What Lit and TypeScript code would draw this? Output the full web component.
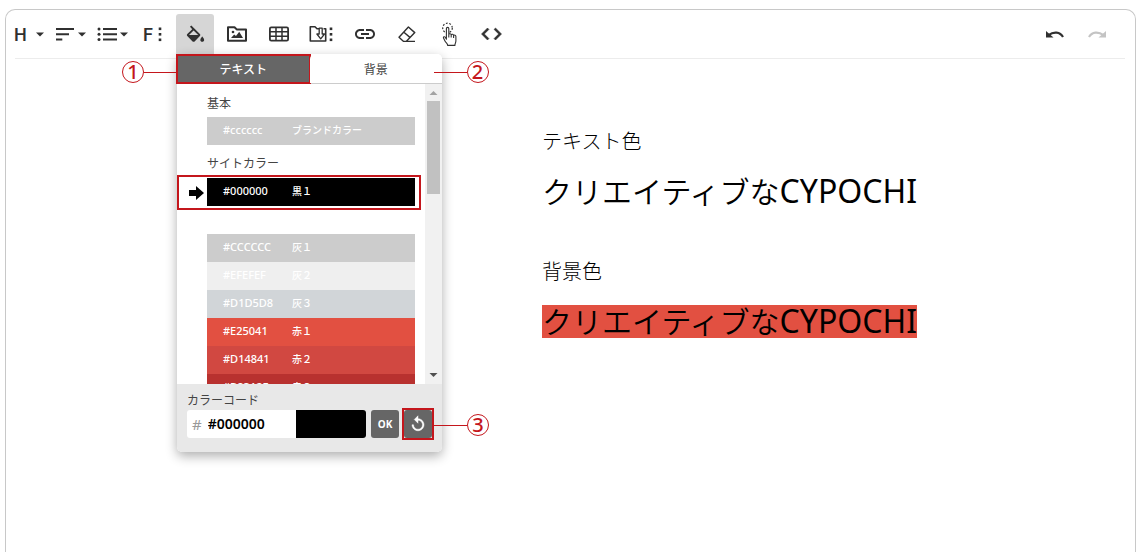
import { LitElement, html, svg, css, nothing } from "lit";
import { customElement, property, state } from "lit/decorators.js";
import { classMap } from "lit/directives/class-map.js";
import { styleMap } from "lit/directives/style-map.js";

const caret = (x: number) => svg`<path d="M${x} 18.4h8l-4 4.2z"/>`;
const dots = (x: number) => svg`
  <rect x=${x} y="13.5" width="2.6" height="2.6"/>
  <rect x=${x} y="19" width="2.6" height="2.6"/>
  <rect x=${x} y="24.5" width="2.6" height="2.6"/>`;

const icons: Record<string, unknown> = {
  heading: svg`<text class="letter" x="6" y="27">H</text>${caret(28)}`,
  align: svg`<path d="M6 14h18v2H6zM6 19.3h13v2H6zM6 24.5h6.3v2H6z"/>${caret(28)}`,
  list: svg`<path d="M11 14h14v2H11zM11 19.3h14v2H11zM11 24.5h14v2H11z"/>
    <circle cx="7" cy="15" r="1.5"/><circle cx="7" cy="20.3" r="1.5"/><circle cx="7" cy="25.5" r="1.5"/>${caret(28)}`,
  font: svg`<text class="letter" x="9" y="27">F</text>${dots(24.7)}`,
  fill: svg`<path transform="translate(8 11.5) scale(.96)" d="M16.56 8.94L7.62 0 6.21 1.41l2.38 2.38-5.15 5.15c-.59.59-.59 1.54 0 2.12l5.5 5.5c.29.29.68.44 1.06.44s.77-.15 1.06-.44l5.5-5.5c.59-.58.59-1.53 0-2.12zM5.21 10L10 5.21 14.79 10H5.21zM19 11.5s-2 2.17-2 3.5c0 1.1.9 2 2 2s2-.9 2-2c0-1.33-2-3.5-2-3.5z"/>`,
  image: svg`<path class="line" stroke-width="2" stroke-linejoin="round" d="M10 13.2h6.5l2.2 2.2h9.3v11.4H10z"/>
    <circle cx="15" cy="18" r="1.3"/><path d="M13 24l3.2-3.6 1.8 1.7 3.2-4.3L25 24z"/>`,
  table: svg`<rect class="line" stroke-width="1.8" x="9.9" y="13.4" width="18.2" height="13.2" rx="1.4"/>
    <path class="line" stroke-width="1.5" d="M10 17.8h18M10 22.2h18M16 13.5v13M22 13.5v13"/>`,
  file: svg`<path class="line" stroke-width="1.6" stroke-linejoin="round" d="M17 14.8h-2l-2-2H8.3v14.2h15.4V14.8H21.5"/>
    <path class="line" stroke-width="1.3" stroke-linejoin="round" d="M17.2 14.2h3v5.8h2.3l-3.8 4.8-3.8-4.8h2.3z"/>${dots(27.7)}`,
  link: svg`<path transform="translate(9 8)" d="M3.9 12c0-1.71 1.39-3.1 3.1-3.1h4V7H7c-2.76 0-5 2.24-5 5s2.24 5 5 5h4v-1.9H7c-1.71 0-3.1-1.39-3.1-3.1zM8 13h8v-2H8v2zm9-6h-4v1.9h4c1.71 0 3.1 1.39 3.1 3.1s-1.39 3.1-3.1 3.1h-4V17h4c2.76 0 5-2.24 5-5s-2.24-5-5-5z"/>`,
  erase: svg`<path class="line" stroke-width="1.4" stroke-linejoin="round" d="M22.4 13l6.4 5.6-8.6 8.8h-2.6L13 23.2zM17.6 18l6.6 5.6M18 27.4h11"/>`,
  hand: svg`<circle class="line" stroke-width="1.2" stroke-dasharray="1.8 1.6" cx="19.5" cy="14" r="4.8"/>
    <path class="hand" stroke-width="1.1" stroke-linejoin="round" d="M18.4 25.2V14.6c0-1.7 2.4-1.7 2.4 0v5.8c.4-1 2.3-.8 2.4.4.5-.9 2.2-.6 2.4.6.7-.7 2.3-.2 2.3 1.2v4.2c0 2-1 2.6-1 4.6h-7.2c0-1.8-1.7-2.4-2.6-4.2l-1.6-3.1c-.5-1.3 1-1.9 1.8-.8zM20.8 20.4v3M23.2 20.8v2.8M25.6 21.5v2.5"/>`,
  code: svg`<path stroke="currentColor" stroke-width=".6" transform="translate(9.5 8)" d="M9.4 16.6L4.8 12l4.6-4.6L8 6l-6 6 6 6 1.4-1.4zm5.2 0l4.6-4.6-4.6-4.6L16 6l6 6-6 6-1.4-1.4z"/>`,
  undo: svg`<path d="M10 17v6.5h7.5z"/><path class="line" stroke-width="2.2" d="M12.5 21.2c5-3.8 11.5-3.6 14.5 1.8"/>`,
  redo: svg`<path d="M28 17v6.5h-7.5z"/><path class="line" stroke-width="2.2" d="M25.5 21.2c-5-3.8-11.5-3.6-14.5 1.8"/>`,
};

@customElement("tool-button")
class ToolButton extends LitElement {
  @property() icon = "";
  @property() label = "";
  @property({ type: Boolean }) active = false;
  @property({ type: Boolean }) disabled = false;

  static styles = css`
    :host { display: block; }
    .tool {
      display: block;
      width: 38px;
      height: 40px;
      padding: 0;
      border: 0;
      border-radius: 3px 3px 0 0;
      background: none;
      color: #303030;
      cursor: pointer;
    }
    .active { background: #d6d6d6; }
    .tool:disabled { color: #c4c4c4; }
    .glyph { display: block; fill: currentColor; }
    .line { fill: none; stroke: currentColor; }
    .hand { fill: #fff; stroke: currentColor; }
    .letter { font: 500 18px Roboto, sans-serif; }
  `;

  render() {
    return html`<button
      class=${classMap({ tool: true, active: this.active })}
      aria-label=${this.label}
      ?disabled=${this.disabled}
    ><svg class="glyph" width="38" height="40" viewBox="0 0 38 40">${icons[this.icon]}</svg></button>`;
  }
}

@customElement("step-mark")
class StepMark extends LitElement {
  @property() n = "";

  static styles = css`
    :host { display: flex; align-items: center; }
    :host([side="left"]) { flex-direction: row-reverse; }
    .wire { width: 33px; height: 1px; background: #c4161c; }
    .ring {
      box-sizing: border-box;
      width: 22px;
      height: 22px;
      border: 1px solid #c4161c;
      border-radius: 50%;
      color: #c4161c;
      font: 500 20px/20px "Noto Sans", sans-serif;
      text-align: center;
    }
  `;

  render() {
    return html`<span class="wire"></span><span class="ring">${this.n}</span>`;
  }
}

interface Swatch { code: string; name: string; }

const siteColors: Swatch[] = [
  { code: "#CCCCCC", name: "灰１" },
  { code: "#EFEFEF", name: "灰２" },
  { code: "#D1D5D8", name: "灰３" },
  { code: "#E25041", name: "赤１" },
  { code: "#D14841", name: "赤２" },
  { code: "#B8312F", name: "赤３" },
];

@customElement("color-panel")
class ColorPanel extends LitElement {
  @state() private tab = "text";
  @state() private value = "#000000";

  static styles = css`
    :host {
      display: block;
      width: 265px;
      border-radius: 5px;
      background: #fff;
      box-shadow: 0 4px 12px rgba(0, 0, 0, 0.32);
      color: #444;
      font: 12px/18px "Noto Sans", "Noto Sans CJK JP", sans-serif;
    }
    button { font: inherit; border: 0; padding: 0; cursor: pointer; }
    .tabs { display: grid; grid-template-columns: 1fr 1fr; border-bottom: 1px solid #ccc; }
    .tab-slot { position: relative; }
    .tab {
      display: block;
      width: 100%;
      height: 29px;
      padding-top: 2px;
      border-radius: 5px 5px 0 0;
      background: #fff;
      color: #444;
    }
    .selected { background: #666; color: #fff; font-weight: 500; }
    .frame {
      position: absolute;
      border: 2px solid #c4161c;
      pointer-events: none;
    }
    .frame-tab { inset: 0 -1px -1px -1px; }
    .frame-row { inset: -3px -6px -4px -30px; }
    .frame-reset { inset: -2px; }
    .mark { position: absolute; }
    .mark-text { right: 100%; top: 7px; }
    .mark-back { left: 124px; top: 7px; }
    .mark-reset { left: 30px; top: 4px; }
    .body { display: grid; grid-template-columns: 1fr 17px; height: 300px; overflow: hidden; }
    .colors { padding: 11px 10px 0 30px; overflow: hidden; }
    .title { margin: 0; font-size: 12px; font-weight: 400; line-height: 18px; }
    .group { margin: 4px 0 10px; }
    .picked { position: relative; margin: 5px 0 28px; }
    .swatch {
      display: grid;
      grid-template-columns: 69px 1fr;
      align-items: center;
      width: 100%;
      height: 28px;
      padding: 0 0 2px 16px;
      color: #fff;
      font-size: 11px;
      font-weight: 500;
      line-height: 26px;
      text-align: left;
    }
    .name { font-size: 10px; }
    .pointer { position: absolute; left: -18px; top: 8px; }
    .scroll {
      display: flex;
      flex-direction: column;
      background: #f1f1f1;
    }
    .arrow { display: block; flex: none; }
    .track { flex: 1; padding: 0 2px; }
    .thumb { height: 93px; background: #c1c1c1; }
    .foot { padding: 8px 10px 14px; border-radius: 0 0 5px 5px; background: #e8e8e8; }
    .label { display: block; line-height: 18px; }
    .row { display: flex; gap: 5px; }
    .field {
      flex: 1;
      display: flex;
      align-items: center;
      height: 28px;
      border-radius: 3px;
      background: #fff;
      overflow: hidden;
    }
    .hash { padding: 0 6px 0 5px; color: #999; font-size: 15px; }
    .code {
      flex: 1;
      min-width: 0;
      height: 28px;
      padding: 0 0 2px;
      box-sizing: border-box;
      border: 0;
      outline: 0;
      background: none;
      color: #000;
      font: 600 14px "Noto Sans", sans-serif;
    }
    .preview { width: 70px; height: 28px; }
    .act {
      display: block;
      width: 28px;
      height: 28px;
      border-radius: 3px;
      background: #666;
      color: #fff;
      font-size: 10px;
      font-weight: 700;
    }
    .reset { position: relative; }
    .replay { display: block; margin: 0 auto; fill: #fff; stroke: #fff; stroke-width: 0.6; }
  `;

  private swatch(s: Swatch) {
    return html`<button
      class="swatch"
      style=${styleMap({ backgroundColor: s.code })}
      @click=${() => (this.value = s.code)}
    ><span>${s.code}</span><span class="name">${s.name}</span></button>`;
  }

  private tabButton(id: string, text: string) {
    return html`<button
      class=${classMap({ tab: true, selected: this.tab === id })}
      role="tab"
      aria-selected=${this.tab === id}
      @click=${() => (this.tab = id)}
    >${text}</button>`;
  }

  render() {
    return html`
      <div class="tabs" role="tablist">
        <div class="tab-slot">
          ${this.tabButton("text", "テキスト")}
          <span class="frame frame-tab"></span>
          <step-mark class="mark mark-text" side="left" n="1"></step-mark>
        </div>
        <div class="tab-slot">
          ${this.tabButton("back", "背景")}
          <step-mark class="mark mark-back" n="2"></step-mark>
        </div>
      </div>
      <div class="body">
        <div class="colors">
          <h3 class="title">基本</h3>
          <div class="group">${this.swatch({ code: "#cccccc", name: "ブランドカラー" })}</div>
          <h3 class="title">サイトカラー</h3>
          <div class="picked">
            ${this.swatch({ code: "#000000", name: "黒１" })}
            <svg class="pointer" width="16" height="14" viewBox="0 0 16 14"><path d="M0 4h7V0l8 7-8 7v-4H0z"/></svg>
            <span class="frame frame-row"></span>
          </div>
          ${siteColors.map((s) => this.swatch(s))}
        </div>
        <div class="scroll" aria-hidden="true">
          <svg class="arrow" width="17" height="17"><path fill="#a3a3a3" d="M4.5 11h8L8.5 7z"/></svg>
          <div class="track"><div class="thumb"></div></div>
          <svg class="arrow" width="17" height="17"><path fill="#505050" d="M4.5 6h8l-4 4z"/></svg>
        </div>
      </div>
      <div class="foot">
        <label class="label" for="code">カラーコード</label>
        <div class="row">
          <div class="field">
            <span class="hash">#</span>
            <input id="code" class="code" type="text" .value=${this.value}
              @input=${(e: Event) => (this.value = (e.target as HTMLInputElement).value)} />
            <span class="preview" style=${styleMap({ backgroundColor: this.value })}></span>
          </div>
          <button class="act">OK</button>
          <div class="reset">
            <button class="act" aria-label="リセット" @click=${() => (this.value = "#000000")}>
              <svg class="replay" width="18" height="18" viewBox="0 0 24 24"><path d="M12 5V1L7 6l5 5V7c3.31 0 6 2.69 6 6s-2.69 6-6 6-6-2.69-6-6H4c0 4.42 3.58 8 8 8s8-3.58 8-8-3.58-8-8-8z"/></svg>
            </button>
            <span class="frame frame-reset"></span>
            <step-mark class="mark mark-reset" n="3"></step-mark>
          </div>
        </div>
      </div>
    `;
  }
}

const tools: [string, string][] = [
  ["heading", "見出し"],
  ["align", "配置"],
  ["list", "リスト"],
  ["font", "フォント"],
  ["fill", "色"],
  ["image", "画像"],
  ["table", "表"],
  ["file", "ファイル"],
  ["link", "リンク"],
  ["erase", "書式を消去"],
  ["hand", "ボタン"],
  ["code", "コード"],
];

@customElement("app-root")
class AppRoot extends LitElement {
  static styles = css`
    :host {
      display: block;
      box-sizing: border-box;
      height: 100vh;
      padding: 9px 10px 0 5px;
      overflow: hidden;
      background: #fff;
      color: #000;
      font-family: "Noto Sans", "Noto Sans CJK JP", sans-serif;
    }
    .editor {
      box-sizing: border-box;
      height: 100%;
      border: 1px solid #c8c8c8;
      border-bottom: 0;
      border-radius: 10px 10px 0 0;
    }
    .bar { display: flex; gap: 4px; padding: 4px 19px 0 2px; }
    .space { flex: 1; }
    .anchor { position: relative; }
    .menu { position: absolute; z-index: 2; left: 1px; top: 40px; }
    .rule { height: 1px; margin: 4px 10px 0 9px; border: 0; background: #ececec; }
    .page { padding: 66px 20px 0 536px; }
    .caption { margin: 0; font-size: 20px; font-weight: 300; line-height: 34px; }
    .sample { margin: 16px 0 47px; font-size: 30px; font-weight: 350; line-height: 33px; }
    .latin { font-size: 32px; font-weight: 400; line-height: 30px; }
    .mark { display: inline-block; background: #e25041; }
  `;

  render() {
    const sample = html`クリエイティブな<span class="latin">CYPOCHI</span>`;
    return html`
      <main class="editor">
        <div class="bar" role="toolbar">
          ${tools.map(
            ([icon, label]) => html`<div class="anchor">
              <tool-button icon=${icon} label=${label} ?active=${icon === "fill"}></tool-button>
              ${icon === "fill" ? html`<color-panel class="menu"></color-panel>` : nothing}
            </div>`
          )}
          <span class="space"></span>
          <tool-button icon="undo" label="元に戻す"></tool-button>
          <tool-button icon="redo" label="やり直す" disabled></tool-button>
        </div>
        <hr class="rule" />
        <article class="page">
          <p class="caption">テキスト色</p>
          <p class="sample">${sample}</p>
          <p class="caption">背景色</p>
          <p class="sample"><span class="mark">${sample}</span></p>
        </article>
      </main>
    `;
  }
}
